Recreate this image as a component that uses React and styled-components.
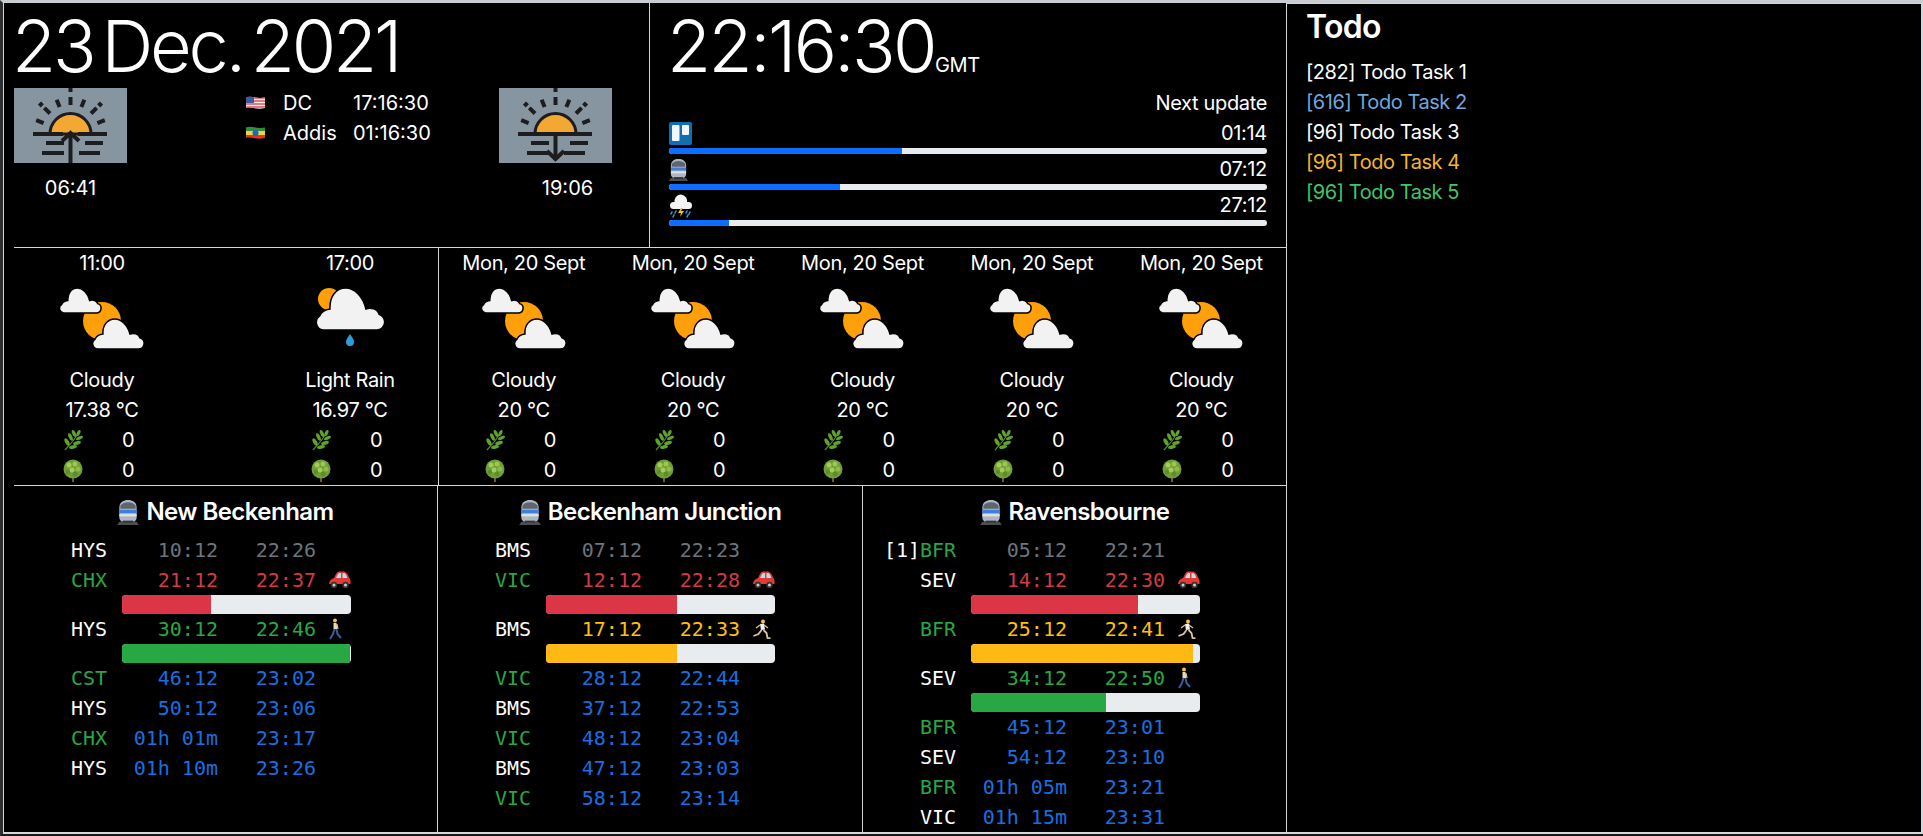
import React from 'react';
import styled, { createGlobalStyle } from 'styled-components';

const Global = createGlobalStyle`
  html, body { margin: 0; padding: 0; background: #000; }
  body { font-family: Inter, "Noto Sans", sans-serif; font-size: 20px; line-height: 30px; color: #fff; }
  * { box-sizing: border-box; }
`;

const line = '#d4d7da';

const Page = styled.div`
  width: 1923px; height: 836px; overflow: hidden; background: #000;
  border-top: 3px solid #c9ccd1; border-left: 3px solid #2e2e30; border-bottom: 2px solid #17181a;
`;
const Frame = styled.div`
  display: flex; height: 831px; border-left: 1px solid ${line}; border-right: 2px solid ${line};
  border-bottom: 2px solid ${line};
`;
const Board = styled.main`
  width: 1282px; flex: none; display: flex; flex-direction: column;
`;
const TopRow = styled.section`
  height: 245px; flex: none; display: grid; grid-template-columns: 636px 1fr;
  margin-left: 10px; border-bottom: 1px solid ${line};
`;
const DateCell = styled.div`
  border-right: 1px solid ${line};
`;
const BigLine = styled.div`
  font-size: 72px; line-height: 85px; font-weight: 300; white-space: nowrap;
`;
const DateText = styled(BigLine)`
  letter-spacing: -3.2px; word-spacing: -9px; margin-left: -2px;
`;
const SunGrid = styled.div`
  display: grid; grid-template-columns: 232px 253px 113px;
`;
const SunBlock = styled.div`
  display: flex; flex-direction: column; width: 113px;
`;
const SunTime = styled.div`
  text-align: center; margin-top: 10px; padding-left: ${p => p.$shift || 0}px; white-space: nowrap;
`;
const Clocks = styled.div`
  display: grid; grid-template-columns: 37px 70px auto; grid-auto-rows: 30px; align-content: start; align-items: center;
  justify-content: start;
`;
const ClockCell = styled.div`
  padding: 0 19px 0 19px;
`;
const TimeLine = styled(BigLine)`
  letter-spacing: -2.6px; margin-left: -2px;
`;
const Zone = styled.span`
  font-size: 20px; font-weight: 400; letter-spacing: -0.3px; line-height: 1;
`;
const NextLabel = styled.div`
  text-align: right; letter-spacing: -0.35px;
`;
const TimerHead = styled.div`
  display: flex; justify-content: space-between; align-items: center; height: 30px; letter-spacing: -0.3px;
`;
const Track = styled.div`
  height: ${p => p.$h}px; background: #e9ecef; border-radius: ${p => p.$r}px; overflow: hidden;
`;
const Fill = styled.div`
  height: 100%; background: ${p => p.$color};
`;

const WeatherRow = styled.section`
  height: 238px; flex: none; display: grid; grid-template-columns: 425px 1fr;
  margin-left: 10px; border-bottom: 1px solid ${line};
`;
const Hours = styled.div`
  display: flex; justify-content: space-between; padding: 0 23px; border-right: 1px solid ${line};
`;
const Days = styled.div`
  display: grid; grid-template-columns: repeat(5, 1fr);
`;
const Forecast = styled.div`
  width: ${p => p.$w || 'auto'}; display: flex; flex-direction: column; align-items: center; white-space: nowrap; letter-spacing: -0.35px;
`;
const IconBox = styled.div`
  height: 87px; padding-top: 10px;
`;
const StatRow = styled.div`
  display: grid; grid-template-columns: 59px 19px; width: 78px; height: 30px; align-items: center;
`;

const TrainsRow = styled.section`
  flex: 1; display: grid; grid-template-columns: 424px 425px 1fr; margin-left: 10px;
`;
const Station = styled.div`
  border-right: ${p => p.$last ? 'none' : `1px solid ${line}`}; padding-left: 21px; overflow: hidden;
`;
const StationTitle = styled.h3`
  margin: 0 0 0 -21px; height: 49px; padding-top: 2px; display: flex; align-items: center; justify-content: center; gap: 7px;
  font-size: 24px; font-weight: 600; letter-spacing: -0.55px;
`;
const Dep = styled.div`
  display: grid; grid-template-columns: 36px 51px 96px 98px auto; height: 30px; align-items: center;
  font-family: "DejaVu Sans Mono", "Liberation Mono", monospace; font-size: 20px; white-space: pre;
  color: ${p => p.$color};
`;
const Platform = styled.span` color: #fff; `;
const Dest = styled.span` color: ${p => p.$color}; `;
const Wait = styled.span` text-align: right; `;
const Eta = styled.span` text-align: right; `;
const Mode = styled.span` padding-left: 12px; display: flex; align-items: center; height: 30px; `;
const LegBar = styled.div`
  margin-left: 87px; width: 229px;
`;

const Todo = styled.aside`
  flex: 1; border-left: 1px solid ${line}; border-top: 1px solid ${line}; padding-left: 19px;
`;
const TodoTitle = styled.h2`
  margin: 0; font-size: 32px; font-weight: 600; line-height: 38px; height: 53px; padding-top: 4px; letter-spacing: -0.7px;
`;
const TodoList = styled.ul`
  margin: 0; padding: 0; list-style: none; letter-spacing: -0.45px;
`;
const TodoItem = styled.li` color: ${p => p.$color}; `;

const C = { grey: '#6c757d', red: '#d23a48', green: '#28a745', blue: '#1a6fe0', yellow: '#ffc107', white: '#fff' };
const BAR = { red: '#dc3545', green: '#28a745', yellow: '#ffb914' };

const SunIcon = ({ dir }) => {
  const rays = [-68, -45, -22, 0, 22, 45, 68];
  return (
    <svg width="113" height="75" viewBox="0 0 113 75">
      <rect width="113" height="75" fill="#8795a1" />
      <g stroke="#1d1d1f" strokeWidth="4" fill="none">
        <path d="M56.5 0v4" />
        {rays.map(a => {
          const r = (a * Math.PI) / 180;
          const s = Math.sin(r), c = Math.cos(r);
          return <line key={a} x1={56.5 + s * 29} y1={46 - c * 29} x2={56.5 + s * 37} y2={46 - c * 37} />;
        })}
        <path d="M25.500 15l2.800 2.800M87.500 15l-2.800 2.800" strokeWidth="4.500" />
        <path d="M36 46a20.500 20.500 0 0 1 41 0z" fill="#f2a833" strokeWidth="3" />
        {dir === 'up'
          ? <path d="M19 46h30M64 46h29" />
          : <path d="M19 46h74" />}
        <path d="M32 55h18M71 55h18M28 65h22M65 65h21" />
        {dir === 'up'
          ? <g><path d="M56.500 75V46" /><path d="M48 53l8.500-8 8.500 8" /></g>
          : <g><path d="M56.500 46V70" /><path d="M48 63l8.500 8 8.500-8" /></g>}
      </g>
    </svg>
  );
};

const CLOUD = 'M11 60H89A11.500 11.500 0 0 0 92 37.500C90 30 80 27 73 30C69 12 56 0 44 0C30 0 20 12 21 30C14 31 8 35 6 40A11 11 0 0 0 11 60Z';
const Cloud = ({ x, y, w, h }) => (
  <path d={CLOUD} transform={`translate(${x} ${y}) scale(${w / 100} ${h / 60})`} fill="#f2f2f2" stroke="#000" strokeWidth="1.500" vectorEffect="non-scaling-stroke" />
);
const PartlyCloudy = () => (
  <svg width="86" height="62" viewBox="0 0 86 62">
    <circle cx="43" cy="33" r="19" fill="#ff9f0a" />
    <Cloud x={0} y={0} w={42} h={25} />
    <Cloud x={33} y={31} w={52} h={30} />
  </svg>
);
const LightRain = () => (
  <svg width="70" height="60" viewBox="0 0 70 60">
    <circle cx="14" cy="11" r="11" fill="#ff9f0a" />
    <Cloud x={0.500} y={0} w={69} h={42} />
    <path d="M35 46c2 3 4 5.500 4 8a4 4 0 0 1-8 0c0-2.500 2-5 4-8z" fill="#2d9cdb" />
  </svg>
);
const Trello = () => (
  <svg width="23" height="23" viewBox="0 0 23 23">
    <rect width="23" height="23" rx="2" fill="#0f6fb0" />
    <rect x="3" y="3" width="7.500" height="16" rx="1" fill="#f1f6fb" />
    <rect x="13" y="3" width="7" height="10" rx="1" fill="#f1f6fb" />
  </svg>
);
const Train = ({ w = 22, h = 26 }) => (
  <svg width={w} height={h} viewBox="0 0 20 24">
    <path d="M2 21l-2 3h20l-2-3z" fill="#4b4f55" />
    <path d="M2 8C2 3 6 1 10 1s8 2 8 7v9c0 3-3 5-8 5s-8-2-8-5z" fill="#aeb6bf" />
    <path d="M3 6c2-2 4-3 7-3s5 1 7 3v3H3z" fill="#5c6670" />
    <rect x="2" y="10" width="16" height="3" fill="#3f7fd6" />
    <rect x="2" y="14" width="16" height="2" fill="#dfe3e8" />
    <path d="M5 20h10v2H5z" fill="#333" />
  </svg>
);
const Storm = () => (
  <svg width="24" height="25" viewBox="0 0 24 25">
    <rect x="1" y="9" width="22" height="7" rx="3.500" fill="#f4f4f4" />
    <path d="M12 1.500a7 7 0 0 1 6 9H6a6.500 6.500 0 0 1 6-9z" fill="#f4f4f4" />
    <path d="M12 15l-3 5h3l-1 4 4-6h-3l2-3z" fill="#f5c518" />
    <path d="M3 19l-1 2M7 18l-1 2M5 22l-1 2M18 18l-1 2M21 19l-1 2M19 22l-1 2" stroke="#3e9be0" strokeWidth="1.500" strokeLinecap="round" />
  </svg>
);
const Flag = ({ kind }) => (
  <svg width="19" height="14" viewBox="0 0 19 14">
    <defs>
      <clipPath id={`wave-${kind}`}>
        <path d="M0 1.500c5-2 10 1.500 19 0V12c-8 2-14-1.500-19 0z" />
      </clipPath>
    </defs>
    <g clipPath={`url(#wave-${kind})`}>
      {kind === 'us' ? (
        <g>
          <rect width="19" height="14" fill="#f3f3f3" />
          <path d="M0 2h19M0 5h19M0 8h19M0 11h19" stroke="#e0525e" strokeWidth="1.500" />
          <rect width="8" height="7" fill="#3d5a9e" />
        </g>
      ) : (
        <g>
          <rect width="19" height="5" fill="#2f8f3f" />
          <rect y="5" width="19" height="4" fill="#f3d33b" />
          <rect y="9" width="19" height="5" fill="#d8392f" />
          <circle cx="9.500" cy="7" r="3" fill="#2a62b8" />
        </g>
      )}
    </g>
  </svg>
);
const Leaf = () => (
  <svg width="20" height="21" viewBox="0 0 20 21">
    <path d="M2 20C7 15 12 9 16 2" stroke="#5b8a2e" strokeWidth="1.200" fill="none" />
    <g fill="#5fa32f">
      <ellipse cx="15.500" cy="3" rx="1.600" ry="3.200" transform="rotate(25 15.500 3)" />
      <ellipse cx="11" cy="3.500" rx="1.700" ry="3.800" transform="rotate(-25 11 3.500)" />
      <ellipse cx="16.500" cy="8" rx="1.700" ry="3.800" transform="rotate(65 16.500 8)" />
      <ellipse cx="7.500" cy="7" rx="1.800" ry="4" transform="rotate(-25 7.500 7)" />
      <ellipse cx="14" cy="13" rx="1.800" ry="4" transform="rotate(75 14 13)" />
      <ellipse cx="4" cy="12" rx="1.900" ry="4" transform="rotate(-30 4 12)" />
      <ellipse cx="10" cy="17" rx="1.800" ry="4" transform="rotate(80 10 17)" />
    </g>
  </svg>
);
const Tree = () => (
  <svg width="20" height="23" viewBox="0 0 20 23">
    <rect x="9" y="17" width="2" height="6" fill="#7a5230" />
    <circle cx="10" cy="10" r="9.500" fill="#6f9f35" />
    <circle cx="6" cy="6" r="2.500" fill="#a4cc5a" />
    <circle cx="12" cy="5" r="2.500" fill="#9cc653" />
    <circle cx="15" cy="10" r="2.500" fill="#8fbb49" />
    <circle cx="9" cy="11" r="2.500" fill="#a4cc5a" />
    <circle cx="5" cy="13" r="2.200" fill="#5d8c2c" />
    <circle cx="12" cy="15" r="2.400" fill="#5d8c2c" />
  </svg>
);
const Car = () => (
  <svg width="23" height="18" viewBox="0 0 23 18">
    <path d="M1 13c0-3 2-5 5-6l2-4c1-2 2-2.500 4-2.500h3c3 0 5 2.500 6 6 1 1 2 3 1.500 6.500H1z" fill="#e23a35" />
    <path d="M8 7l2-4c.5-1 1-1 2-1h1v5zM14.500 2h1c2 0 3 2 3.800 5h-4.800z" fill="#b9dcef" />
    <circle cx="6" cy="14" r="3.200" fill="#333" />
    <circle cx="6" cy="14" r="1.500" fill="#ccc" />
    <circle cx="17.500" cy="14" r="3.200" fill="#333" />
    <circle cx="17.500" cy="14" r="1.500" fill="#ccc" />
  </svg>
);
const Walker = () => (
  <svg width="16" height="22" viewBox="0 0 16 22">
    <circle cx="7" cy="2.500" r="2" fill="#f0c24b" />
    <path d="M5.500 5h3l1 6h-4z" fill="#e8dcc0" />
    <path d="M9 6l1 5" stroke="#e9c08a" strokeWidth="1.200" />
    <path d="M6.500 11L5 16l-3 5M8.500 11l1 5 3.500 4" stroke="#3a5d96" strokeWidth="2" fill="none" />
  </svg>
);
const Runner = () => (
  <svg width="20" height="20" viewBox="0 0 20 20">
    <circle cx="11" cy="2.500" r="2" fill="#f0c24b" />
    <path d="M8 5l4-.5 1 6-4 .5z" fill="#f1f1f1" />
    <path d="M12 6l4 3M8 6L4 9" stroke="#e9c08a" strokeWidth="1.300" fill="none" />
    <path d="M9.500 11l-3 4-5 2M11.500 11l3 3 1 5 3 .500" stroke="#d8c6a0" strokeWidth="1.800" fill="none" />
  </svg>
);

const MODE = { car: <Car />, walk: <Walker />, run: <Runner /> };

const hours = [
  { when: '11:00', label: 'Cloudy', temp: '17.38 °C', icon: <PartlyCloudy /> },
  { when: '17:00', label: 'Light Rain', temp: '16.97 °C', icon: <LightRain /> },
];
const days = Array.from({ length: 5 }, () => ({ when: 'Mon, 20 Sept', label: 'Cloudy', temp: '20 °C', icon: <PartlyCloudy /> }));

const W = C.white, G = C.green;
const stations = [
  { name: 'New Beckenham', rows: [
    { d: 'HYS', dc: W, t: '10:12', e: '22:26', c: 'grey' },
    { d: 'CHX', dc: G, t: '21:12', e: '22:37', c: 'red', m: 'car', p: 39 },
    { d: 'HYS', dc: W, t: '30:12', e: '22:46', c: 'green', m: 'walk', p: 99.500 },
    { d: 'CST', dc: G, t: '46:12', e: '23:02', c: 'blue' },
    { d: 'HYS', dc: W, t: '50:12', e: '23:06', c: 'blue' },
    { d: 'CHX', dc: G, t: '01h 01m', e: '23:17', c: 'blue' },
    { d: 'HYS', dc: W, t: '01h 10m', e: '23:26', c: 'blue' },
  ] },
  { name: 'Beckenham Junction', rows: [
    { d: 'BMS', dc: W, t: '07:12', e: '22:23', c: 'grey' },
    { d: 'VIC', dc: G, t: '12:12', e: '22:28', c: 'red', m: 'car', p: 57 },
    { d: 'BMS', dc: W, t: '17:12', e: '22:33', c: 'yellow', m: 'run', p: 57 },
    { d: 'VIC', dc: G, t: '28:12', e: '22:44', c: 'blue' },
    { d: 'BMS', dc: W, t: '37:12', e: '22:53', c: 'blue' },
    { d: 'VIC', dc: G, t: '48:12', e: '23:04', c: 'blue' },
    { d: 'BMS', dc: W, t: '47:12', e: '23:03', c: 'blue' },
    { d: 'VIC', dc: G, t: '58:12', e: '23:14', c: 'blue' },
  ] },
  { name: 'Ravensbourne', rows: [
    { pre: '[1]', d: 'BFR', dc: G, t: '05:12', e: '22:21', c: 'grey' },
    { d: 'SEV', dc: W, t: '14:12', e: '22:30', c: 'red', m: 'car', p: 73 },
    { d: 'BFR', dc: G, t: '25:12', e: '22:41', c: 'yellow', m: 'run', p: 97 },
    { d: 'SEV', dc: W, t: '34:12', e: '22:50', c: 'green', m: 'walk', p: 59 },
    { d: 'BFR', dc: G, t: '45:12', e: '23:01', c: 'blue' },
    { d: 'SEV', dc: W, t: '54:12', e: '23:10', c: 'blue' },
    { d: 'BFR', dc: G, t: '01h 05m', e: '23:21', c: 'blue' },
    { d: 'VIC', dc: W, t: '01h 15m', e: '23:31', c: 'blue' },
  ] },
];

const timers = [
  { icon: <Trello />, label: '01:14', p: 39 },
  { icon: <Train w={19} h={23} />, label: '07:12', p: 28.600 },
  { icon: <Storm />, label: '27:12', p: 10 },
];

const todos = [
  ['[282] Todo Task 1', '#ffffff'],
  ['[616] Todo Task 2', '#6fa8dc'],
  ['[96] Todo Task 3', '#ffffff'],
  ['[96] Todo Task 4', '#f5b430'],
  ['[96] Todo Task 5', '#43c467'],
];

const ForecastCol = ({ f, w }) => (
  <Forecast $w={w}>
    <div>{f.when}</div>
    <IconBox>{f.icon}</IconBox>
    <div>{f.label}</div>
    <div>{f.temp}</div>
    <StatRow><Leaf /><span>0</span></StatRow>
    <StatRow><Tree /><span>0</span></StatRow>
  </Forecast>
);

export default function App() {
  return (
    <Page>
      <Global />
      <Frame>
        <Board>
          <TopRow>
            <DateCell>
              <DateText>23 Dec. 2021</DateText>
              <SunGrid>
                <SunBlock>
                  <SunIcon dir="up" />
                  <SunTime>06:41</SunTime>
                </SunBlock>
                <Clocks>
                  <Flag kind="us" /><span>DC</span><span>17:16:30</span>
                  <Flag kind="et" /><span>Addis</span><span>01:16:30</span>
                </Clocks>
                <SunBlock>
                  <SunIcon dir="down" />
                  <SunTime $shift={24}>19:06</SunTime>
                </SunBlock>
              </SunGrid>
            </DateCell>
            <ClockCell>
              <TimeLine>22:16:30<Zone>GMT</Zone></TimeLine>
              <NextLabel>Next update</NextLabel>
              {timers.map(t => (
                <div key={t.label}>
                  <TimerHead>{t.icon}<span>{t.label}</span></TimerHead>
                  <Track $h={6} $r={3}><Fill $color="#0d6efd" style={{ width: `${t.p}%` }} /></Track>
                </div>
              ))}
            </ClockCell>
          </TopRow>
          <WeatherRow>
            <Hours>{hours.map(f => <ForecastCol key={f.when} f={f} w="130px" />)}</Hours>
            <Days>{days.map((f, i) => <ForecastCol key={i} f={f} />)}</Days>
          </WeatherRow>
          <TrainsRow>
            {stations.map((s, i) => (
              <Station key={s.name} $last={i === 2}>
                <StationTitle><Train />{s.name}</StationTitle>
                {s.rows.map(r => (
                  <React.Fragment key={r.d + r.t}>
                    <Dep $color={C[r.c]}>
                      <Platform>{r.pre || ''}</Platform>
                      <Dest $color={r.dc}>{r.d}</Dest>
                      <Wait>{r.t}</Wait>
                      <Eta>{r.e}</Eta>
                      <Mode>{r.m ? MODE[r.m] : null}</Mode>
                    </Dep>
                    {r.m && (
                      <LegBar>
                        <Track $h={19} $r={4}><Fill $color={BAR[r.c]} style={{ width: `${r.p}%` }} /></Track>
                      </LegBar>
                    )}
                  </React.Fragment>
                ))}
              </Station>
            ))}
          </TrainsRow>
        </Board>
        <Todo>
          <TodoTitle>Todo</TodoTitle>
          <TodoList>
            {todos.map(([t, c]) => <TodoItem key={t + c} $color={c}>{t}</TodoItem>)}
          </TodoList>
        </Todo>
      </Frame>
    </Page>
  );
}
